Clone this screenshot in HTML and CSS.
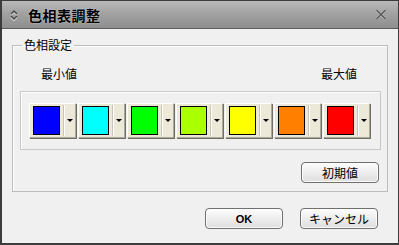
FILE: index.html
```html
<!DOCTYPE html>
<html lang="ja">

<head>
    <meta charset="UTF-8">
    <title>色相表調整</title>
    <link rel="stylesheet" href="styles.css">
</head>

<body>
    <div class="window">
        <div class="titlebar">
            <svg class="title-icon" width="10" height="14" viewBox="0 0 10 14">
                <path d="M2 6 L5 3 L8 6" fill="none" stroke="#fff" stroke-width="2" opacity="0.5" transform="translate(0 1)"/>
                <path d="M2 6 L5 3 L8 6" fill="none" stroke="#4a4a4a" stroke-width="1.5"/>
                <path d="M2 8 L5 11 L8 8" fill="none" stroke="#fff" stroke-width="2" opacity="0.5" transform="translate(0 1)"/>
                <path d="M2 8 L5 11 L8 8" fill="none" stroke="#4a4a4a" stroke-width="1.5"/>
            </svg>
            <span class="title">色相表調整</span>
            <svg class="close" width="12" height="11" viewBox="0 0 12 11">
                <path d="M1.5 1 L10.5 10 M10.5 1 L1.5 10" stroke="#ddd" stroke-width="2.2" opacity="0.6"/>
                <path d="M1.5 1 L10.5 10 M10.5 1 L1.5 10" stroke="#555" stroke-width="1.4"/>
            </svg>
        </div>

        <div class="content">
            <fieldset class="group">
                <legend>色相設定</legend>

                <div class="labels">
                    <span>最小値</span>
                    <span>最大値</span>
                </div>

                <div class="swatches">
                    <div class="color-btn"><span class="swatch" style="background-color: #0000ff;"></span><span class="drop"></span></div>
                    <div class="color-btn"><span class="swatch" style="background-color: #00ffff;"></span><span class="drop"></span></div>
                    <div class="color-btn"><span class="swatch" style="background-color: #00ff00;"></span><span class="drop"></span></div>
                    <div class="color-btn"><span class="swatch" style="background-color: #aaff00;"></span><span class="drop"></span></div>
                    <div class="color-btn"><span class="swatch" style="background-color: #ffff00;"></span><span class="drop"></span></div>
                    <div class="color-btn"><span class="swatch" style="background-color: #ff8000;"></span><span class="drop"></span></div>
                    <div class="color-btn"><span class="swatch" style="background-color: #ff0000;"></span><span class="drop"></span></div>
                </div>

                <div class="reset-row">
                    <button class="btn">初期値</button>
                </div>
            </fieldset>

            <div class="actions">
                <button class="btn ok">OK</button>
                <button class="btn">キャンセル</button>
            </div>
        </div>
    </div>
</body>

</html>
```

FILE: styles.css
```css
body {
    margin: 0;
    padding: 0;
    font-family: "Noto Sans CJK JP", "Noto Sans", sans-serif;
    font-size: 12px;
    color: #000;
    background-color: #f0f0f0;
}

.window {
    width: 399px;
    height: 245px;
    box-sizing: border-box;
    border: 1px solid #3c3c3c;
    border-left-width: 2px;
    border-bottom-width: 2px;
    background-color: #f0f0f0;
}

.titlebar {
    height: 27px;
    border-bottom: 1px solid #5e5e5e;
    background: linear-gradient(to bottom, #b9b9b9, #a2a2a2 45%, #8e8e8e);
    display: flex;
    align-items: center;
    padding: 0 9px 0 7px;
}

.title-icon {
    margin-right: 9px;
}

.title {
    font-size: 14px;
    font-weight: bold;
    letter-spacing: 0.5px;
    text-shadow: 0 0 2px #d8d8d8;
    flex: 1;
}

.close {
    margin-right: 2px;
}

.content {
    padding: 9px 10px 0 10px;
}

.group {
    margin: 0;
    padding: 15px 6px 8px 7px;
    border: 1px solid #bcbcbc;
    box-shadow: inset 1px 1px 0 #fff;
}

.group legend {
    padding: 0 2px;
    margin-left: 2px;
    line-height: 14px;
}

.labels {
    display: flex;
    justify-content: space-between;
    padding: 0 24px 0 21px;
    line-height: 14px;
}

.swatches {
    margin-top: 10px;
    border: 1px solid #c8c8c8;
    box-shadow: inset 1px 1px 0 #fff;
    padding: 11px 9px 11px 8px;
    display: flex;
    gap: 2px;
}

.color-btn {
    width: 47px;
    height: 35px;
    box-sizing: border-box;
    background-color: #ece9d8;
    border: 1px solid;
    border-color: #fff #aca899 #aca899 #fff;
    box-shadow: 1px 1px 0 #716f64;
    display: flex;
    align-items: center;
    padding-left: 3px;
}

.swatch {
    width: 28px;
    height: 29px;
    box-sizing: border-box;
    border: 1px solid #000;
}

.drop {
    margin-left: 3px;
    width: 11px;
    height: 31px;
    border-left: 1px solid #c8c5b4;
    box-shadow: inset 1px 0 0 #fff;
    display: flex;
    align-items: center;
    justify-content: center;
}

.drop::after {
    content: "";
    border-left: 3px solid transparent;
    border-right: 3px solid transparent;
    border-top: 3px solid #000;
}

.reset-row {
    display: flex;
    justify-content: flex-end;
    margin-top: 12px;
    padding-right: 2px;
}

.btn {
    width: 78px;
    height: 21px;
    padding: 0;
    font-family: inherit;
    font-size: 12px;
    color: #000;
    border: 1px solid #707070;
    border-radius: 4px;
    background: linear-gradient(to bottom, #fdfdfd, #ededed 50%, #dedede);
    box-shadow: inset 0 0 0 1px #fbfbfb;
}

.btn.ok {
    font-family: "Liberation Sans", Arial, sans-serif;
    font-weight: bold;
    font-size: 11px;
}

.actions {
    display: flex;
    justify-content: flex-end;
    gap: 17px;
    margin-top: 16px;
    padding-right: 10px;
}
```
